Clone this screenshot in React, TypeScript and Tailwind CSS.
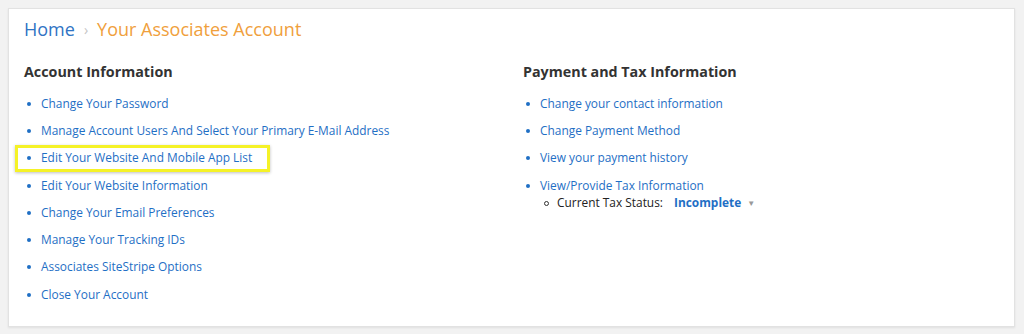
import React from "react";

const leftLinks = [
  "Change Your Password",
  "Manage Account Users And Select Your Primary E-Mail Address",
  "Edit Your Website And Mobile App List",
  "Edit Your Website Information",
  "Change Your Email Preferences",
  "Manage Your Tracking IDs",
  "Associates SiteStripe Options",
  "Close Your Account",
];

const rightLinks = [
  "Change your contact information",
  "Change Payment Method",
  "View your payment history",
  "View/Provide Tax Information",
];

const LinkItem = ({ text, highlight }: { text: string; highlight?: boolean }) => (
  <li className="relative flex items-center h-[27.3px]">
    {highlight && (
      <span className="absolute left-[-9px] top-[0px] w-[255px] h-[27px] border-[3px] border-[#f5f227] shadow-[0_1px_3px_rgba(0,0,0,0.25)]" />
    )}
    <span className="w-[17px] flex justify-start pl-[3px]">
      <span className="w-[4px] h-[4px] rounded-full bg-[#1f6fc5]" />
    </span>
    <a className="text-[#1f6fc5] text-[11.9px] leading-none cursor-pointer">{text}</a>
  </li>
);

const App = () => {
  return (
    <div className="w-[1024px] h-[334px] bg-[#f2f2f2] pt-[8px] pl-[8px] font-['Open_Sans','Liberation_Sans',sans-serif]">
      <div className="w-[1007px] h-[319px] bg-white border border-[#e2e2e2] shadow-[0_1px_2px_rgba(0,0,0,0.08)] pl-[15px] pt-[8px]">
        <div className="flex items-center h-[24px] text-[18px]">
          <span className="text-[#2f74c4]">Home</span>
          <span className="mx-[9px] text-[#c4c4c4] text-[14px]">›</span>
          <span className="text-[#f0a03c]">Your Associates Account</span>
        </div>
        <div className="grid grid-cols-[499px_1fr] mt-[21px]">
          <div>
            <h2 className="text-[14.3px] font-bold text-[#333] h-[20px] leading-[20px]">Account Information</h2>
            <ul className="mt-[8px]">
              {leftLinks.map((t, i) => (
                <LinkItem key={t} text={t} highlight={i === 2} />
              ))}
            </ul>
          </div>
          <div>
            <h2 className="text-[14.3px] font-bold text-[#333] h-[20px] leading-[20px]">Payment and Tax Information</h2>
            <ul className="mt-[8px]">
              {rightLinks.map((t) => (
                <LinkItem key={t} text={t} />
              ))}
            </ul>
            <div className="flex items-center pl-[21px] -mt-[3px] h-[14px] text-[11.9px] leading-none">
              <span className="w-[5px] h-[5px] rounded-full border border-[#333] mr-[8px]" />
              <span className="text-[#222]">Current Tax Status:</span>
              <span className="ml-[11px] text-[#1f6fc5] font-bold">Incomplete</span>
              <span className="ml-[6px] text-[#999] text-[8px]">▼</span>
            </div>
          </div>
        </div>
      </div>
    </div>
  );
};

export default App;
